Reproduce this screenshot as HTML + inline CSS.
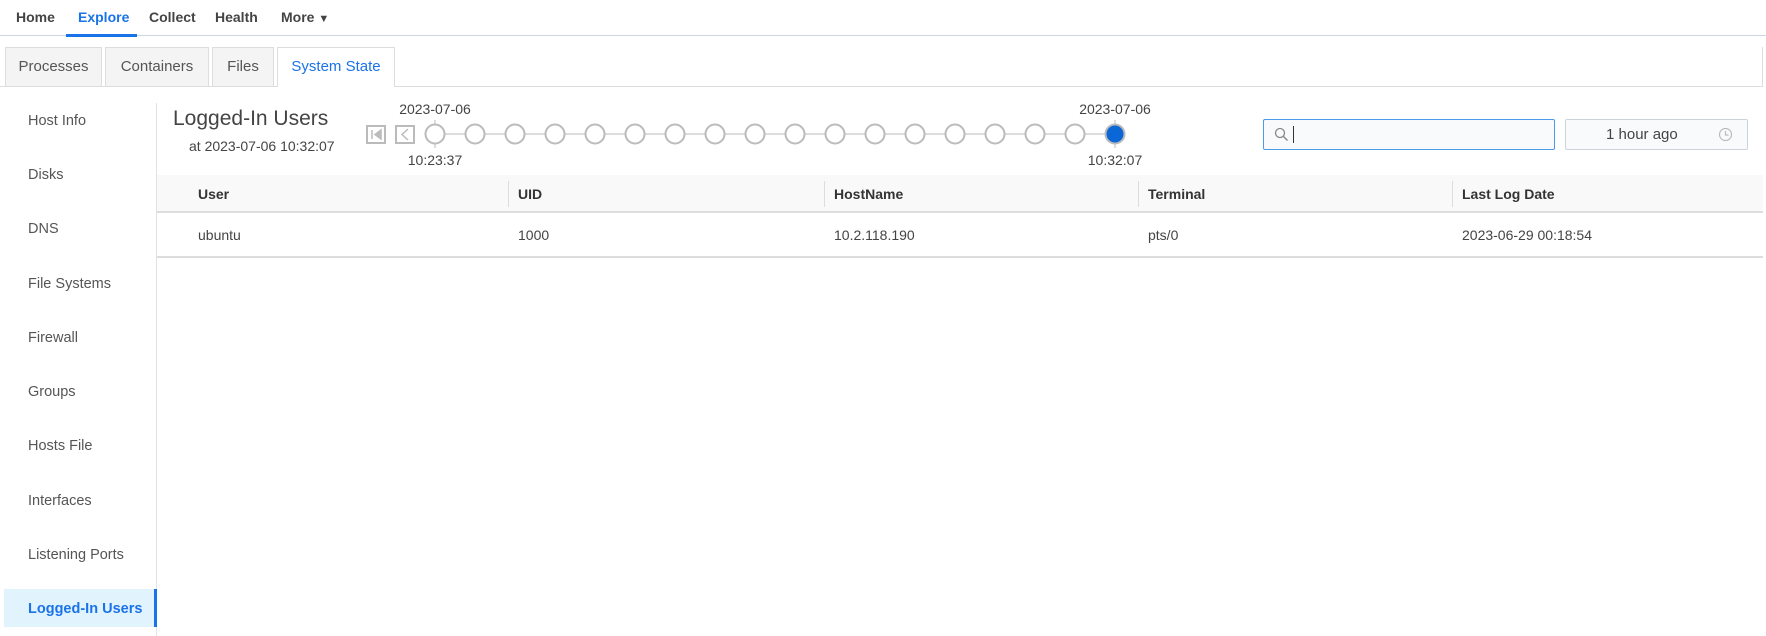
<!DOCTYPE html>
<html><head><meta charset="utf-8"><style>
*{box-sizing:border-box;margin:0;padding:0}
body{width:1766px;height:636px;background:#fff;font-family:"Liberation Sans",sans-serif;color:#333;position:relative;overflow:hidden}
.a{position:absolute;white-space:nowrap}
.nav{font-size:14px;font-weight:bold;color:#444;top:9px}
.tab{position:absolute;top:47px;height:39px;background:#f4f4f4;border:1px solid #ddd;border-bottom:none;font-size:15px;color:#555;text-align:center;line-height:38px}
.side{position:absolute;left:28px;font-size:14.5px;color:#555}
.th{position:absolute;top:175px;height:38px;line-height:38px;font-size:14px;font-weight:bold;color:#333}
.td{position:absolute;top:227px;font-size:14px;color:#444}
.dv{position:absolute;top:181px;height:26px;width:1px;background:#ddd}
</style></head><body>
<div class="a nav" style="left:16px">Home</div>
<div class="a nav" style="left:78px;color:#1a73e8">Explore</div>
<div class="a nav" style="left:149px">Collect</div>
<div class="a nav" style="left:215px">Health</div>
<div class="a nav" style="left:281px">More <span style="font-size:11px">▼</span></div>
<div class="a" style="left:0;top:35px;width:1766px;height:1px;background:#c9d6e3"></div>
<div class="a" style="left:66px;top:34px;width:71px;height:3px;background:#1a73e8"></div>

<div class="tab" style="left:5px;width:97px">Processes</div>
<div class="tab" style="left:105px;width:104px">Containers</div>
<div class="tab" style="left:212px;width:62px">Files</div>
<div class="tab" style="left:277px;width:118px;background:#fff;color:#1a73e8;height:40px;z-index:2">System State</div>
<div class="a" style="left:0;top:86px;width:1763px;height:1px;background:#ddd"></div>
<div class="a" style="left:1762px;top:47px;width:1px;height:40px;background:#ddd"></div>

<div class="a" style="left:156px;top:103px;width:1px;height:533px;background:#e2e2e2"></div>
<div class="side" style="top:113px">Host Info</div>
<div class="side" style="top:167px">Disks</div>
<div class="side" style="top:221px">DNS</div>
<div class="side" style="top:276px">File Systems</div>
<div class="side" style="top:330px">Firewall</div>
<div class="side" style="top:384px">Groups</div>
<div class="side" style="top:438px">Hosts File</div>
<div class="side" style="top:493px">Interfaces</div>
<div class="side" style="top:547px">Listening Ports</div>
<div class="a" style="left:4px;top:589px;width:153px;height:38px;background:#e1f3fc;border-right:3px solid #1a73e8"></div>
<div class="side" style="top:601px;color:#1a73e8;font-weight:bold">Logged-In Users</div>

<div class="a" style="left:173px;top:107px;font-size:21px;color:#444">Logged-In Users</div>
<div class="a" style="left:189px;top:138px;font-size:14px;color:#444">at 2023-07-06 10:32:07</div>

<svg class="a" style="left:360px;top:100px" width="800" height="75">
<rect x="7" y="26" width="18" height="17" fill="none" stroke="#bbb" stroke-width="2"/>
<path d="M12 30v9M21 30l-6 4.5 6 4.5z" stroke="#bbb" fill="#bbb" stroke-width="1.5"/>
<rect x="36" y="26" width="18" height="17" fill="none" stroke="#bbb" stroke-width="2"/>
<path d="M48 29l-6 5.5 6 5.5" stroke="#bbb" fill="none" stroke-width="1.5"/>
<line x1="75" y1="34" x2="755" y2="34" stroke="#bbb"/>
<line x1="75" y1="20" x2="75" y2="48" stroke="#bbb"/>
<line x1="755" y1="20" x2="755" y2="48" stroke="#bbb"/>
<g fill="#fff" stroke="#bbb" stroke-width="2">
<circle cx="75" cy="34" r="9.5"/><circle cx="115" cy="34" r="9.5"/><circle cx="155" cy="34" r="9.5"/><circle cx="195" cy="34" r="9.5"/><circle cx="235" cy="34" r="9.5"/><circle cx="275" cy="34" r="9.5"/><circle cx="315" cy="34" r="9.5"/><circle cx="355" cy="34" r="9.5"/><circle cx="395" cy="34" r="9.5"/><circle cx="435" cy="34" r="9.5"/><circle cx="475" cy="34" r="9.5"/><circle cx="515" cy="34" r="9.5"/><circle cx="555" cy="34" r="9.5"/><circle cx="595" cy="34" r="9.5"/><circle cx="635" cy="34" r="9.5"/><circle cx="675" cy="34" r="9.5"/><circle cx="715" cy="34" r="9.5"/>
<circle cx="755" cy="34" r="9.5" fill="#0b66d6"/></g>
<g font-family="Liberation Sans" font-size="14" fill="#444" text-anchor="middle">
<text x="75" y="14">2023-07-06</text><text x="75" y="65">10:23:37</text>
<text x="755" y="14">2023-07-06</text><text x="755" y="65">10:32:07</text></g>
</svg>

<div class="a" style="left:1263px;top:119px;width:292px;height:31px;border:1px solid #4a9be8;border-radius:2px;background:#f9fafc"></div>
<svg class="a" style="left:1274px;top:127px" width="16" height="16"><circle cx="6" cy="6" r="4.5" fill="none" stroke="#888" stroke-width="1.3"/><path d="M9.5 9.5l4 4" stroke="#888" stroke-width="1.5"/></svg>
<div class="a" style="left:1293px;top:126px;width:1px;height:17px;background:#333"></div>
<div class="a" style="left:1565px;top:119px;width:183px;height:31px;border:1px solid #ccd3db;border-radius:2px;background:#f9fafc;font-size:15px;color:#444;line-height:29px;padding-left:40px">1 hour ago</div>
<svg class="a" style="left:1718px;top:127px" width="15" height="15"><circle cx="7.5" cy="7.5" r="6" fill="none" stroke="#bbb" stroke-width="1.2"/><path d="M7.5 4v4h3" fill="none" stroke="#bbb" stroke-width="1.2"/></svg>

<div class="a" style="left:157px;top:175px;width:1606px;height:38px;background:#f9f9f9;border-bottom:2px solid #ddd"></div>
<div class="th" style="left:198px">User</div>
<div class="dv" style="left:508px"></div><div class="th" style="left:518px">UID</div>
<div class="dv" style="left:824px"></div><div class="th" style="left:834px">HostName</div>
<div class="dv" style="left:1138px"></div><div class="th" style="left:1148px">Terminal</div>
<div class="dv" style="left:1452px"></div><div class="th" style="left:1462px">Last Log Date</div>
<div class="td" style="left:198px">ubuntu</div>
<div class="td" style="left:518px">1000</div>
<div class="td" style="left:834px">10.2.118.190</div>
<div class="td" style="left:1148px">pts/0</div>
<div class="td" style="left:1462px">2023-06-29 00:18:54</div>
<div class="a" style="left:157px;top:256px;width:1606px;height:2px;background:#ddd"></div>
</body></html>
